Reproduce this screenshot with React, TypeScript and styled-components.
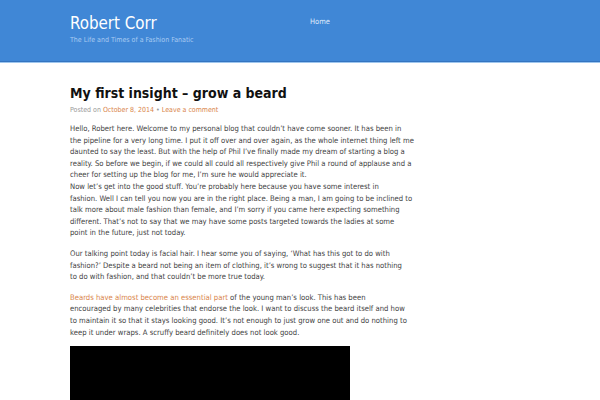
import styled, { createGlobalStyle } from 'styled-components';

const GlobalStyle = createGlobalStyle`
  html, body {
    margin: 0;
    padding: 0;
    background: #fff;
  }
  body {
    font-family: "DejaVu Sans Condensed", "DejaVu Sans", sans-serif;
    color: #434343;
    overflow: hidden;
  }
`;

const Masthead = styled.header`
  background-color: #4087d6;
  border-bottom: 1px solid #3474c0;
  box-shadow: 0 1px 0 #9ec6ee;
  height: 62px;
  box-sizing: border-box;
  padding: 13px 70px 0;
  display: flex;
`;

const Branding = styled.div`
  width: 240px;
  display: flex;
  flex-direction: column;
  gap: 2px;
`;

const SiteTitle = styled.a`
  font-size: 16.8px;
  line-height: 20px;
  color: #fff;
  text-decoration: none;
`;

const Tagline = styled.p`
  margin: 0;
  font-size: 7px;
  line-height: 10px;
  color: #a9cbf2;
`;

const Nav = styled.nav`
  display: flex;
  gap: 16px;
  padding-top: 3px;
`;

const NavLink = styled.a`
  font-size: 7.5px;
  line-height: 12px;
  color: #dfeafa;
  text-decoration: none;
`;

const Main = styled.main`
  padding: 23px 70px 0;
`;

const Article = styled.article`
  width: 350px;
`;

const EntryTitle = styled.h1`
  margin: 0;
  font-size: 14px;
  line-height: 17px;
  font-weight: 700;
  color: #111;
`;

const EntryMeta = styled.div`
  margin: 3px 0 8px;
  font-size: 7px;
  line-height: 10px;
  color: #999;
`;

const MetaLink = styled.a`
  color: #d9854b;
  text-decoration: none;
`;

const Paragraph = styled.p<{ $gap?: number }>`
  margin: 0 0 ${p => p.$gap ?? 9}px;
  font-size: 7.65px;
  line-height: 11.6px;
`;

const TextLink = styled.a`
  color: #d9854b;
  text-decoration: none;
`;

const MediaBox = styled.div`
  width: 280px;
  height: 160px;
  background: #000;
`;

export default function App() {
  return (
    <>
      <GlobalStyle />
      <Masthead>
        <Branding>
          <SiteTitle href="#">Robert Corr</SiteTitle>
          <Tagline>The Life and Times of a Fashion Fanatic</Tagline>
        </Branding>
        <Nav>
          <NavLink href="#">Home</NavLink>
        </Nav>
      </Masthead>
      <Main>
        <Article>
          <EntryTitle>My first insight – grow a beard</EntryTitle>
          <EntryMeta>
            Posted on <MetaLink href="#">October 8, 2014</MetaLink> • <MetaLink href="#">Leave a comment</MetaLink>
          </EntryMeta>
          <Paragraph>
            Hello, Robert here. Welcome to my personal blog that couldn’t have come sooner. It has been in<br />
            the pipeline for a very long time. I put it off over and over again, as the whole internet thing left me<br />
            daunted to say the least. But with the help of Phil I’ve finally made my dream of starting a blog a<br />
            reality. So before we begin, if we could all could all respectively give Phil a round of applause and a<br />
            cheer for setting up the blog for me, I’m sure he would appreciate it.<br />
            Now let’s get into the good stuff. You’re probably here because you have some interest in<br />
            fashion. Well I can tell you now you are in the right place. Being a man, I am going to be inclined to<br />
            talk more about male fashion than female, and I’m sorry if you came here expecting something<br />
            different. That’s not to say that we may have some posts targeted towards the ladies at some<br />
            point in the future, just not today.
          </Paragraph>
          <Paragraph>
            Our talking point today is facial hair. I hear some you of saying, ‘What has this got to do with<br />
            fashion?’ Despite a beard not being an item of clothing, it’s wrong to suggest that it has nothing<br />
            to do with fashion, and that couldn’t be more true today.
          </Paragraph>
          <Paragraph $gap={8}>
            <TextLink href="#">Beards have almost become an essential part</TextLink> of the young man’s look. This has been<br />
            encouraged by many celebrities that endorse the look. I want to discuss the beard itself and how<br />
            to maintain it so that it stays looking good. It’s not enough to just grow one out and do nothing to<br />
            keep it under wraps. A scruffy beard definitely does not look good.
          </Paragraph>
          <MediaBox />
        </Article>
      </Main>
    </>
  );
}
